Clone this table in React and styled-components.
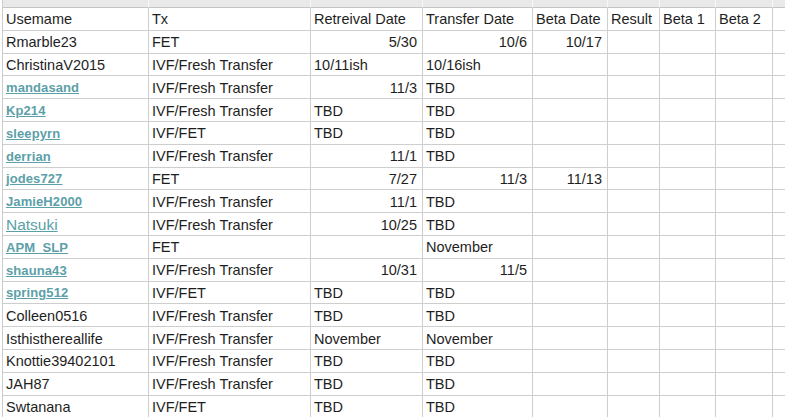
import React from 'react';
import styled, { createGlobalStyle } from 'styled-components';

const GlobalStyle = createGlobalStyle`
  body {
    margin: 0;
    background: #fff;
    font-family: "Liberation Sans", Arial, sans-serif;
  }
`;

const COLS = '146px 162px 112px 110px 75px 52px 56px 57px 120px';

const Sheet = styled.div`
  width: 785px;
  height: 417px;
  overflow: hidden;
  padding-left: 2px;
  box-sizing: border-box;
`;

const Grid = styled.div`
  display: grid;
  grid-template-columns: ${COLS};
  border-left: 1px solid #cccccc;
`;

const TopCell = styled.div`
  height: 7px;
  background: #e9e9e9;
  border-right: 1px solid #f6f6f6;
  border-bottom: 1px solid #c4c4c4;
`;

const Cell = styled.div`
  height: 22.8px;
  box-sizing: border-box;
  border-right: 1px solid #cecece;
  border-bottom: 1px solid #cecece;
  padding: 1px ${(p) => (p.$right ? '5px' : '3px')} 0 3px;
  display: flex;
  align-items: center;
  justify-content: ${(p) => (p.$right ? 'flex-end' : 'flex-start')};
  font-size: 14.5px;
  color: #1e1e1e;
  white-space: nowrap;
  overflow: hidden;
`;

const Link = styled.a`
  color: #5ba0a8;
  text-decoration: underline;
  font-weight: ${(p) => (p.$big ? 400 : 700)};
  font-size: ${(p) => (p.$big ? '15.5px' : '13px')};
  letter-spacing: ${(p) => (p.$big ? '0' : '0.1px')};
`;

const header = ['Usemame', 'Tx', 'Retreival Date', 'Transfer Date', 'Beta Date', 'Result', 'Beta 1', 'Beta 2', ''];

// [user, link?, tx, retrieval, transfer, beta]  — numbers are right aligned
const rows = [
  ['Rmarble23', 0, 'FET', '5/30', '10/6', '10/17'],
  ['ChristinaV2015', 0, 'IVF/Fresh Transfer', '10/11ish', '10/16ish', ''],
  ['mandasand', 1, 'IVF/Fresh Transfer', '11/3', 'TBD', ''],
  ['Kp214', 1, 'IVF/Fresh Transfer', 'TBD', 'TBD', ''],
  ['sleepyrn', 1, 'IVF/FET', 'TBD', 'TBD', ''],
  ['derrian', 1, 'IVF/Fresh Transfer', '11/1', 'TBD', ''],
  ['jodes727', 1, 'FET', '7/27', '11/3', '11/13'],
  ['JamieH2000', 1, 'IVF/Fresh Transfer', '11/1', 'TBD', ''],
  ['Natsuki', 2, 'IVF/Fresh Transfer', '10/25', 'TBD', ''],
  ['APM_SLP', 1, 'FET', '', 'November', ''],
  ['shauna43', 1, 'IVF/Fresh Transfer', '10/31', '11/5', ''],
  ['spring512', 1, 'IVF/FET', 'TBD', 'TBD', ''],
  ['Colleen0516', 0, 'IVF/Fresh Transfer', 'TBD', 'TBD', ''],
  ['Isthisthereallife', 0, 'IVF/Fresh Transfer', 'November', 'November', ''],
  ['Knottie39402101', 0, 'IVF/Fresh Transfer', 'TBD', 'TBD', ''],
  ['JAH87', 0, 'IVF/Fresh Transfer', 'TBD', 'TBD', ''],
  ['Swtanana', 0, 'IVF/FET', 'TBD', 'TBD', ''],
];

const isNum = (v) => /^\d+\/\d+$/.test(v);

const App = () => (
  <Sheet>
    <GlobalStyle />
    <Grid>
      {header.map((_, i) => (
        <TopCell key={'t' + i} />
      ))}
      {header.map((h, i) => (
        <Cell key={'h' + i}>{h}</Cell>
      ))}
      {rows.map(([user, link, tx, ret, tr, beta], r) => (
        <React.Fragment key={r}>
          <Cell>
            {link ? <Link $big={link === 2}>{user}</Link> : user}
          </Cell>
          <Cell>{tx}</Cell>
          <Cell $right={isNum(ret)}>{ret}</Cell>
          <Cell $right={isNum(tr)}>{tr}</Cell>
          <Cell $right={isNum(beta)}>{beta}</Cell>
          <Cell />
          <Cell />
          <Cell />
          <Cell />
        </React.Fragment>
      ))}
    </Grid>
  </Sheet>
);

export default App;
